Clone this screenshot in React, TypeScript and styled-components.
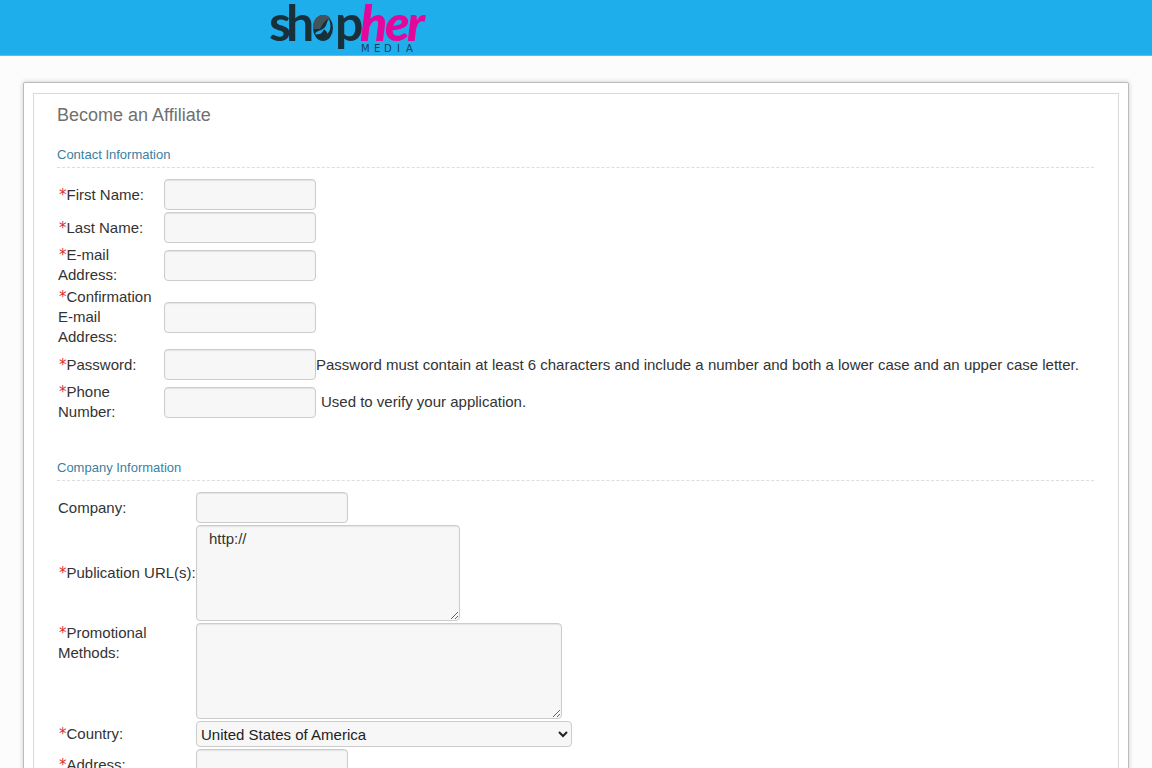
import React from 'react';
import styled, { createGlobalStyle } from 'styled-components';

const GlobalStyle = createGlobalStyle`
  *, *::before, *::after { box-sizing: border-box; }
  body {
    margin: 0;
    background: #fcfcfc;
    color: #333;
    font: 15px/20px "Liberation Sans", Arial, sans-serif;
  }
`;

const Header = styled.header`
  height: 56px;
  padding-left: 23.4%;
  background: #1faeec;
  border-bottom: 1px solid #59bfea;
`;

const LogoLink = styled.a`
  display: inline-block;
  height: 55px;
  svg { display: block; }
`;

const Panel = styled.main`
  margin: 26px 23px 24px;
  padding: 10px 9px;
  background: #fff;
  border: 1px solid #bbb;
  border-radius: 2px;
  box-shadow: 0 0 5px #ccc;
`;

const Form = styled.form`
  padding: 11px 24px 24px 23px;
  border: 1px solid #d8d8d8;
`;

const Title = styled.h1`
  margin: 0 0 20px;
  font-size: 18px;
  line-height: 20px;
  font-weight: 400;
  color: #707070;
`;

const Section = styled.section`
  margin-bottom: 36px;
`;

const SectionTitle = styled.h2`
  margin: 0 0 11px;
  padding-bottom: 2px;
  border-bottom: 1px dashed #ddd;
  font-size: 13px;
  line-height: 20px;
  font-weight: 400;
  color: #3a7f9f;
`;

const Rows = styled.div<{ $labelWidth: number }>`
  display: grid;
  grid-template-columns: ${(p) => p.$labelWidth}px 1fr;
  row-gap: 2px;
  padding-left: 1px;
  align-items: center;
`;

const Label = styled.label<{ $top?: boolean; $wide?: boolean }>`
  align-self: ${(p) => (p.$top ? 'start' : 'center')};
  padding-right: ${(p) => (p.$wide ? '0' : '8px')};
  white-space: ${(p) => (p.$wide ? 'nowrap' : 'normal')};
`;

const Star = styled.span`
  padding-left: 1px;
  color: #d9303a;
  font-family: "DejaVu Sans", sans-serif;
  line-height: 1;
`;

const Field = styled.div`
  display: flex;
  align-items: center;
`;

const Hint = styled.span<{ $gap?: boolean }>`
  margin-left: ${(p) => (p.$gap ? '5px' : '0')};
  white-space: nowrap;
`;

const TextInput = styled.input`
  width: 152px;
  height: 31px;
  padding: 3px 12px;
  border: 1px solid #ccc;
  border-radius: 4px;
  background: #f7f7f7;
  box-shadow: inset 0 1px 1px rgba(0, 0, 0, 0.08);
  color: #333;
  font: inherit;
`;

const TextArea = styled.textarea<{ $width: number }>`
  display: block;
  width: ${(p) => p.$width}px;
  height: 96px;
  padding: 3px 12px;
  border: 1px solid #ccc;
  border-radius: 4px;
  background: #f7f7f7;
  box-shadow: inset 0 1px 1px rgba(0, 0, 0, 0.08);
  color: #333;
  font: inherit;
`;

const Select = styled.select`
  width: 376px;
  height: 26px;
  padding: 0;
  border: 1px solid #ccc;
  border-radius: 4px;
  background: #f7f7f7;
  color: #222;
  font: inherit;
`;

function Logo() {
  return (
    <svg width="160" height="55" viewBox="0 0 160 55" role="img" aria-label="Shopher Media">
      <g fontFamily="Lato, sans-serif" fontSize="50" fontWeight="700" fill="#18303a">
        <text x="-1" y="41">s</text>
        <text x="16" y="41">h</text>
        <text x="65" y="41">p</text>
      </g>
      <ellipse cx="53" cy="28" rx="10" ry="13" fill="#18303a" />
      <path d="M43 29C42 21 47 15 53 15C57 15 59 16 60 18C55 20 52 25 50 29Z" fill="#44545c" />
      <path d="M59 19C61 25 61 30 58 33C55 36 53 34 51 34C48 34 47 35 45 34C47 30 51 31 54 28C57 26 56 22 59 19Z" fill="#1faeec" />
      <path d="M54 29C55 31 58 31 57 34L51 38L48 35C51 34 53 32 54 29Z" fill="#18303a" />
      <g fontFamily="Lato, sans-serif" fontSize="50" fontWeight="900" fontStyle="italic" fill="#e3079b">
        <text x="90" y="41">h</text>
        <text x="115" y="41">e</text>
        <text x="137" y="41">r</text>
      </g>
      <g fontFamily="DejaVu Sans, sans-serif" fontSize="10" fill="#18405a">
        <text x="91" y="52">M</text>
        <text x="104" y="52">E</text>
        <text x="114" y="52">D</text>
        <text x="127" y="52">I</text>
        <text x="136" y="52">A</text>
      </g>
    </svg>
  );
}

interface LabelProps {
  id: string;
  text: string;
  required?: boolean;
  top?: boolean;
  wide?: boolean;
}

function FieldLabel({ id, text, required = true, top, wide }: LabelProps) {
  return (
    <Label htmlFor={id} $top={top} $wide={wide}>
      {required && <Star>*</Star>}
      {text}
    </Label>
  );
}

const contactFields = [
  { id: 'first-name', label: 'First Name:', type: 'text' },
  { id: 'last-name', label: 'Last Name:', type: 'text' },
  { id: 'email', label: 'E-mail Address:', type: 'email' },
  { id: 'email-confirm', label: 'Confirmation E-mail Address:', type: 'email' },
  {
    id: 'password',
    label: 'Password:',
    type: 'password',
    hint: 'Password must contain at least 6 characters and include a number and both a lower case and an upper case letter.',
  },
  { id: 'phone', label: 'Phone Number:', type: 'tel', hint: 'Used to verify your application.', gap: true },
];

export default function App() {
  return (
    <>
      <GlobalStyle />
      <Header>
        <LogoLink href="#">
          <Logo />
        </LogoLink>
      </Header>
      <Panel>
        <Form>
          <Title>Become an Affiliate</Title>
          <Section>
            <SectionTitle>Contact Information</SectionTitle>
            <Rows $labelWidth={106}>
              {contactFields.map((f) => (
                <React.Fragment key={f.id}>
                  <FieldLabel id={f.id} text={f.label} />
                  <Field>
                    <TextInput id={f.id} type={f.type} />
                    {f.hint && <Hint $gap={f.gap}>{f.hint}</Hint>}
                  </Field>
                </React.Fragment>
              ))}
            </Rows>
          </Section>
          <Section>
            <SectionTitle>Company Information</SectionTitle>
            <Rows $labelWidth={138}>
              <FieldLabel id="company" text="Company:" required={false} />
              <Field><TextInput id="company" type="text" /></Field>
              <FieldLabel id="urls" text="Publication URL(s):" wide />
              <Field><TextArea id="urls" $width={264} defaultValue="http://" /></Field>
              <FieldLabel id="methods" text="Promotional Methods:" top />
              <Field><TextArea id="methods" $width={366} /></Field>
              <FieldLabel id="country" text="Country:" />
              <Field>
                <Select id="country" defaultValue="US">
                  <option value="US">United States of America</option>
                </Select>
              </Field>
              <FieldLabel id="address" text="Address:" />
              <Field><TextInput id="address" type="text" /></Field>
            </Rows>
          </Section>
        </Form>
      </Panel>
    </>
  );
}
